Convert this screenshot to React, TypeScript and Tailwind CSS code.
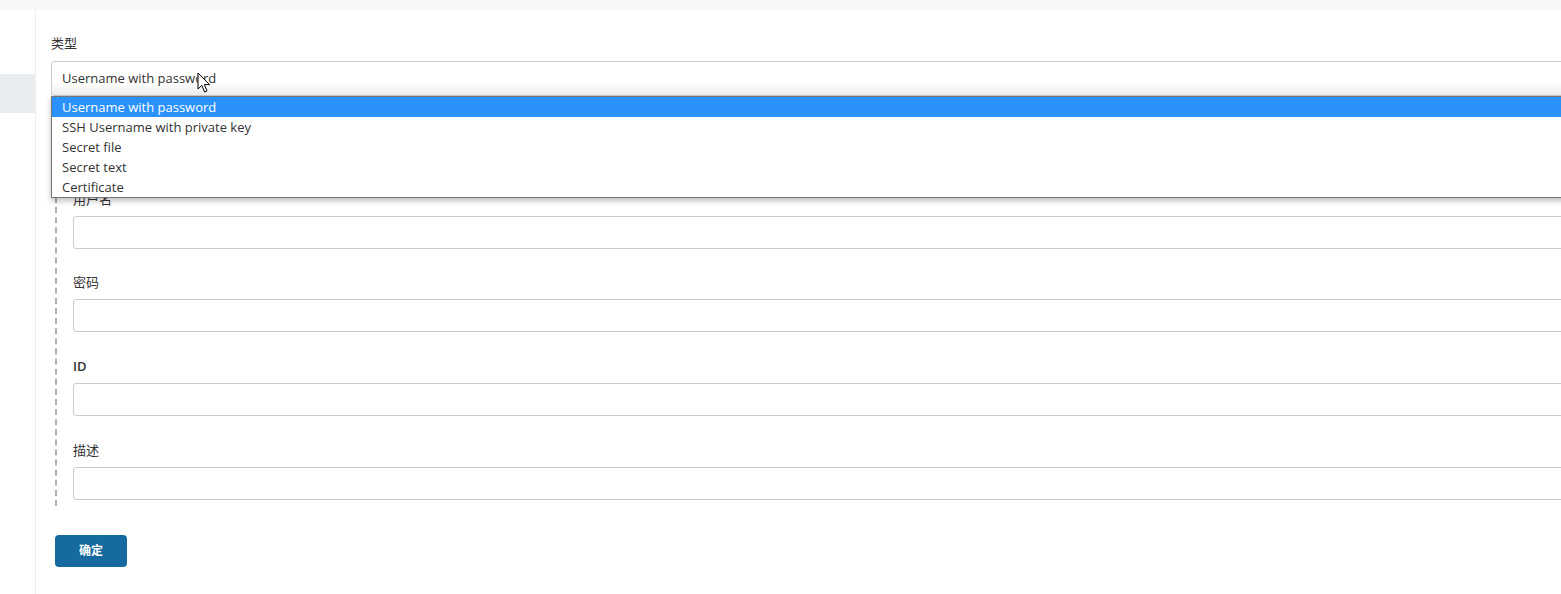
const font = "font-['Segoe_UI','Open_Sans','Noto_Sans_CJK_SC',sans-serif]";

const options = [
  "Username with password",
  "SSH Username with private key",
  "Secret file",
  "Secret text",
  "Certificate",
];

function Field({ label, bold, gap }: { label: string; bold?: boolean; gap: string }) {
  return (
    <div className={gap}>
      <div className={`h-[22px] mb-[6px] text-[13px] leading-[22px] text-[#333] ${bold ? "font-semibold" : ""}`}>
        {label}
      </div>
      <div className="h-[33px] w-[calc(100%+8px)] rounded-[3px] border border-[#ccc] bg-white" />
    </div>
  );
}

function Cursor() {
  return (
    <svg
      className="absolute left-[161px] top-[62px] pointer-events-none"
      width="14"
      height="22"
      viewBox="0 0 14 22"
    >
      <path
        d="M1 1 L1 17 L4.8 13.4 L7.6 20 L10 19 L7.3 12.6 L12.5 12.6 Z"
        fill="white"
        stroke="black"
        strokeWidth="1"
        strokeLinejoin="miter"
      />
    </svg>
  );
}

export default function App() {
  return (
    <div className={`flex h-[594px] w-[1561px] flex-col overflow-hidden bg-white ${font}`}>
      <div className="h-[10px] bg-[#f8f8f8]" />
      <div className="flex flex-1">
        <aside className="w-[36px] border-r border-[#eee]">
          <div className="mt-[64px] h-[39px] bg-[#e9edf0]" />
        </aside>

        <main className="relative flex-1 overflow-hidden pl-[15px]">
          <div className="mt-[23px] h-[20px] text-[13px] leading-[20px] text-[#333]">类型</div>
          <div className="mt-[8px] flex h-[35px] w-[calc(100%+20px)] items-center rounded-[3px] border border-[#ccc] bg-gradient-to-b from-white from-60% to-[#efefef] pl-[10px] text-[13px] text-[#333]">
            Username with password
          </div>

          {/* credential fields, mostly hidden under the open dropdown at the top */}
          <div className="ml-[4px] mt-[10px] border-l-2 border-dashed border-[#b0b0b0] pl-[16px] pt-[82px] pb-[6px]">
            <Field label="用户名" gap="mb-[22px]" />
            <Field label="密码" gap="mb-[23px]" />
            <Field label="ID" bold gap="mb-[23px]" />
            <Field label="描述" gap="" />
          </div>

          <button className="ml-[4px] mt-[29px] h-[32px] w-[72px] rounded-[4px] bg-[#176a9f] text-[12px] font-bold text-white">
            确定
          </button>

          <ul className="absolute left-[15px] top-[86px] w-[calc(100%+20px)] border border-[#767676] bg-white shadow-[0_3px_6px_rgba(0,0,0,0.25)]">
            {options.map((o, i) => (
              <li
                key={o}
                className={`h-[20px] pl-[10px] text-[13px] leading-[20px] ${
                  i === 0 ? "bg-[#2b91fc] text-white" : "text-[#333]"
                }`}
              >
                {o}
              </li>
            ))}
          </ul>

          <Cursor />
        </main>
      </div>
    </div>
  );
}
